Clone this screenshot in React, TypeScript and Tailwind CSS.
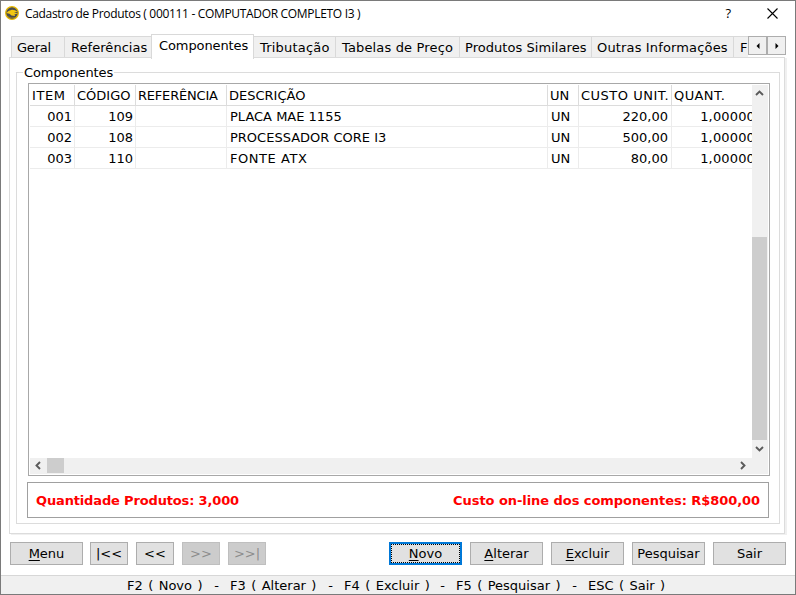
import type { ReactNode } from "react";

const ui = "font-['DejaVu_Sans',Verdana,sans-serif]";

const tabs = [
  { label: "Geral", box: "w-[53px] pl-[5px]", text: "tracking-[-0.2px]" },
  { label: "Referências", box: "w-[88px] pl-[6px]", text: "tracking-[0.05px]" },
  { label: "Componentes", box: "w-[103px] pl-[7px]", text: "tracking-[-0.1px]", active: true },
  { label: "Tributação", box: "w-[81px] pl-[6px]", text: "tracking-[0.2px]" },
  { label: "Tabelas de Preço", box: "w-[124px] pl-[6px]", text: "tracking-[0.15px]" },
  { label: "Produtos Similares", box: "w-[132px] pl-[5px]", text: "tracking-[0.05px]" },
  { label: "Outras Informações", box: "w-[142px] pl-[5px]", text: "tracking-[0.15px]" },
  { label: "F", box: "w-[15px] pl-[6px]", text: "" },
];

const cols = [
  { head: "ITEM", w: "w-[45px]", t: "tracking-[0.6px]", cell: "text-right pr-[2px]" },
  { head: "CÓDIGO", w: "w-[61px]", t: "", cell: "text-right pr-[2px]" },
  { head: "REFERÊNCIA", w: "w-[91px]", t: "tracking-[-0.2px]", cell: "" },
  { head: "DESCRIÇÃO", w: "w-[321px]", t: "", cell: "pl-[3px]" },
  { head: "UN", w: "w-[31px]", t: "", cell: "pl-[3px]" },
  { head: "CUSTO UNIT.", w: "w-[93px]", t: "tracking-[0.5px]", cell: "text-right pr-[3px]" },
  { head: "QUANT.", w: "w-[87px]", t: "tracking-[0.4px]", cell: "text-right pr-[3px] tracking-[0.15px]" },
];

const rows = [
  ["001", "109", "", "PLACA MAE 1155", "UN", "220,00", "1,00000"],
  ["002", "108", "", "PROCESSADOR CORE I3", "UN", "500,00", "1,00000"],
  ["003", "110", "", "FONTE ATX", "UN", "80,00", "1,00000"],
];

const shortcuts = [
  { text: "F2 ( Novo )", w: "w-[103px]" },
  { text: "F3 ( Alterar )", w: "w-[114px]" },
  { text: "F4 ( Excluir )", w: "w-[112px]" },
  { text: "F5 ( Pesquisar )", w: "w-[132px]" },
];

function Logo() {
  return (
    <svg width="14" height="14" viewBox="0 0 14 14" className="shrink-0">
      <circle cx="7" cy="7" r="6.3" fill="#4a4d50" stroke="#e6b800" strokeWidth="1.3" />
      <path d="M1.3 7 3.5 5 7 3.8 10 4.2 12.6 6 9 6.2 13 7.8 9.5 8.3 10 10 6.5 9.6 4.5 7.8Z" fill="#f3c812" />
      <path d="M3 10.5 6 12 10 11.6" stroke="#8d7a28" fill="none" />
    </svg>
  );
}

function Chevron({ d }: { d: string }) {
  return (
    <svg width="9" height="9" viewBox="0 0 9 9" className="block shrink-0">
      <path d={d} fill="none" stroke="#5a5a5a" strokeWidth="1.9" />
    </svg>
  );
}

function Button({ children, w = "w-[73px]", disabled }: { children: ReactNode; w?: string; disabled?: boolean }) {
  const tone = disabled ? "border-[#bfbfbf] bg-[#cccccc] text-[#8c8c8c]" : "border-[#adadad] bg-[#e1e1e1] text-black";
  return (
    <button className={`flex h-[23px] shrink-0 items-center justify-center border whitespace-pre ${w} ${tone}`}>
      {children}
    </button>
  );
}

function Key({ k, rest }: { k: string; rest: string }) {
  return (
    <span>
      <span className="underline decoration-1 underline-offset-2">{k}</span>
      {rest}
    </span>
  );
}

export default function App() {
  return (
    <div className={`flex h-[595px] w-[796px] flex-col overflow-hidden border border-[#7a7a7a] bg-white text-[13px] leading-[16px] text-black ${ui}`}>
      <header className="flex h-[33px] shrink-0 items-start pl-1 pt-[5px]">
        <Logo />
        <span className="ml-[6px] font-['Open_Sans',sans-serif] text-[12px] leading-[15px] tracking-[-0.32px] whitespace-pre">
          Cadastro de Produtos ( 000111 - COMPUTADOR COMPLETO I3 )
        </span>
        <span className="ml-auto font-['Open_Sans',sans-serif] text-[13px] leading-[15px] font-medium">?</span>
        <svg width="11" height="11" viewBox="0 0 11 11" className="ml-[36px] mr-[17px] mt-[2px]">
          <path d="M.5.5 10.5 10.5M10.5.5.5 10.5" stroke="#000" strokeWidth="1.1" />
        </svg>
      </header>

      <nav className="z-10 flex h-[24px] shrink-0 items-end pl-[10px]">
        {tabs.map((t, i) =>
          t.active ? (
            <div key={t.label} className={`-mb-px -ml-px flex h-[25px] shrink-0 border border-b-0 border-[#d9d9d9] bg-white pt-[3px] whitespace-nowrap ${t.box}`}>
              <span className={t.text}>{t.label}</span>
            </div>
          ) : (
            <div key={t.label} className={`mb-px flex h-[21px] shrink-0 overflow-hidden border-t border-[#d9d9d9] bg-[#f0f0f0] pt-[3px] whitespace-nowrap ${i === 3 ? "" : "border-l"} ${t.box}`}>
              <span className={t.text}>{t.label}</span>
            </div>
          )
        )}
        <div className="mb-[3px] flex h-[19px]">
          <div className="flex w-[19px] items-center justify-center border border-[#adadad] bg-[#f0f0f0]">
            <svg width="4" height="6" viewBox="0 0 4 6"><path d="M3.5 0v6L.5 3Z" /></svg>
          </div>
          <div className="flex w-[19px] items-center justify-center border border-[#adadad] bg-[#f0f0f0]">
            <svg width="4" height="6" viewBox="0 0 4 6"><path d="M.5 0v6l3-3Z" /></svg>
          </div>
        </div>
      </nav>

      <main className="-mt-px ml-2 h-[477px] w-[776px] shrink-0 border border-[#dcdcdc] pt-[6px] pr-[4px] pl-[6px] shadow-[2px_1px_0_#f0f0f0]">
        <div className="flex h-4 shrink-0 items-center">
          <i className="h-px w-[7px] bg-[#dcdcdc]" />
          <span className="px-px pt-px tracking-[-0.1px]">Componentes</span>
          <i className="h-px flex-1 bg-[#dcdcdc]" />
        </div>
        <div className="-mt-[7px] flex h-[451px] flex-col border border-t-0 border-[#dcdcdc] pt-[10px] pl-[10px]">
          <div className="ml-px h-[393px] w-[742px] shrink-0 border border-[#a8a8a8] p-px">
            <div className="flex h-[373px]">
              <div className="w-[722px] overflow-hidden">
                <div className="flex h-[21px] w-[740px] border-b border-[#dcdcdc]">
                  {cols.map((c) => (
                    <div key={c.head} className={`shrink-0 border-r border-[#dcdcdc] pt-[3px] pl-[2px] whitespace-nowrap ${c.w} ${c.t}`}>{c.head}</div>
                  ))}
                </div>
                {rows.map((r) => (
                  <div key={r[0]} className="flex h-[21px] w-[740px] border-b border-[#ececec]">
                    {r.map((v, i) => (
                      <div key={i} className={`shrink-0 border-r border-[#ececec] pt-[3px] ${cols[i].cell} ${cols[i].w}`}>
                        <span className={v === "FONTE ATX" ? "tracking-[0.55px]" : ""}>{v}</span>
                      </div>
                    ))}
                  </div>
                ))}
              </div>
              <div className="flex w-[16px] flex-col bg-[#f0f0f0] pt-[4px]">
                <div className="ml-[3px]"><Chevron d="M1 6 4.5 2.5 8 6" /></div>
                <div className="mt-[139px] h-[203px] w-[15px] shrink-0 bg-[#cdcdcd]" />
                <div className="mt-[4px] ml-[3px]"><Chevron d="M1 3 4.5 6.5 8 3" /></div>
              </div>
            </div>
            <div className="flex h-[16px] items-start bg-[#f0f0f0] pl-[4px]">
              <div className="mt-[3px]"><Chevron d="M6 1 2.5 4.5 6 8" /></div>
              <div className="ml-[4px] h-[15px] w-[17px] bg-[#cdcdcd]" />
              <div className="mt-[3px] mr-[21px] ml-auto"><Chevron d="M3 1 6.5 4.5 3 8" /></div>
            </div>
          </div>
          <div className="mt-[6px] flex h-[36px] w-[742px] shrink-0 items-center justify-between border border-[#a0a0a0] px-[8px] pt-px font-bold text-[#ff0000]">
            <span className="tracking-[-0.15px]">Quantidade Produtos: 3,000</span>
            <span className="tracking-[-0.06px]">Custo on-line dos componentes: R$800,00</span>
          </div>
        </div>
      </main>

      <div className="mt-[8px] flex h-[33px] shrink-0 gap-[8px] pl-[9px]">
        <Button w="w-[73px] mr-[-1px]"><Key k="M" rest="enu" /></Button>
        <Button w="w-[38px]">|&lt;&lt;</Button>
        <Button w="w-[38px]">&lt;&lt;</Button>
        <Button w="w-[38px]" disabled>&gt;&gt;</Button>
        <Button w="w-[38px]" disabled>&gt;&gt;|</Button>
        <button className="ml-auto h-[23px] w-[73px] border-2 border-[#0078d7] bg-[#e1e1e1]">
          <span className="flex h-full items-center justify-center border border-dotted border-black"><Key k="N" rest="ovo" /></span>
        </button>
        <Button><Key k="A" rest="lterar" /></Button>
        <Button><Key k="E" rest="xcluir" /></Button>
        <Button>Pesquisar</Button>
        <Button w="w-[73px] mr-[9px]">Sair</Button>
      </div>

      <footer className="flex flex-1 border-t border-[#d7d7d7] bg-[#f0f0f0] pt-[2px] pl-[126px] whitespace-pre [word-spacing:1.3px]">
        {shortcuts.map((s) => (
          <span key={s.text} className={`flex shrink-0 justify-between pr-[11px] ${s.w}`}>
            <span>{s.text}</span>
            <span>-</span>
          </span>
        ))}
        <span>ESC ( Sair )</span>
      </footer>
    </div>
  );
}
